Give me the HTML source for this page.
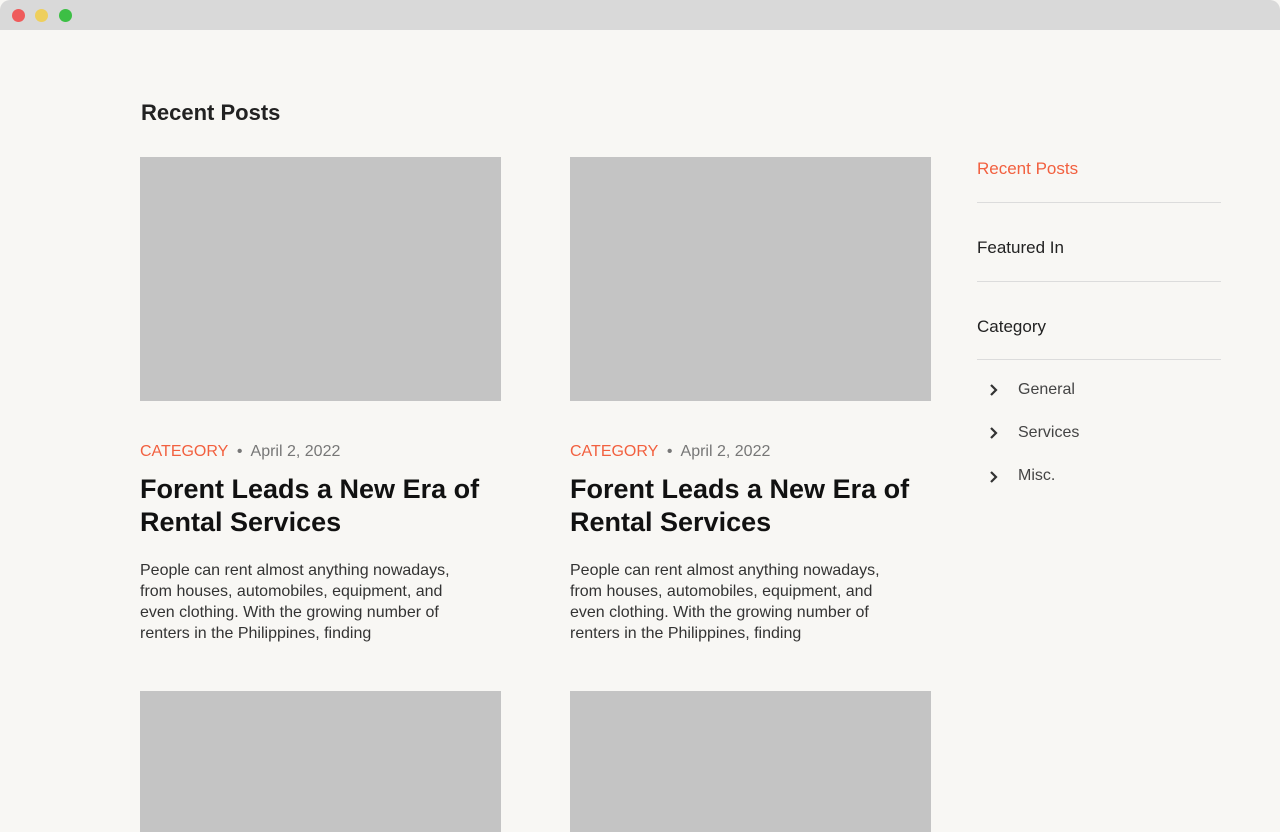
<!DOCTYPE html>
<html><head><meta charset="utf-8"><style>
*{margin:0;padding:0;box-sizing:border-box}
body{width:1280px;height:832px;overflow:hidden;background:#f8f7f4;font-family:"Liberation Sans",sans-serif;position:relative}
.bar{position:absolute;left:0;top:0;width:1280px;height:30px;background:#d9d9d9;border-radius:10px 10px 0 0}
.dot{position:absolute;top:9px;width:13px;height:13px;border-radius:50%}
.a{position:absolute}
.img{position:absolute;background:#c4c4c4;width:361px}
.meta{position:absolute;font-size:16px;color:#777}
.meta span{color:#f2603f}
.title{position:absolute;font-size:27px;font-weight:bold;color:#111;line-height:33px;width:400px;white-space:nowrap}
.ex{position:absolute;font-size:16px;color:#333;line-height:21px;width:400px;white-space:nowrap}
.side{position:absolute;left:977px;font-size:17px;color:#222}
.hr{position:absolute;left:977px;width:244px;height:1px;background:#dcdcdc}
.li{position:absolute;left:1018px;font-size:16px;color:#444}
.ch{position:absolute;left:989px}
</style></head><body>
<div class="bar"></div>
<div class="dot" style="left:12px;background:#ef5b5b"></div>
<div class="dot" style="left:35px;background:#eecf5c"></div>
<div class="dot" style="left:59px;background:#3cbf45"></div>
<div class="a" style="left:141px;top:100px;font-size:22px;color:#222;font-weight:bold">Recent Posts</div>

<div class="img" style="left:140px;top:157px;height:244px"></div>
<div class="img" style="left:570px;top:157px;height:244px"></div>
<div class="meta" style="left:140px;top:443px"><span>CATEGORY</span> &nbsp;•&nbsp; April 2, 2022</div>
<div class="meta" style="left:570px;top:443px"><span>CATEGORY</span> &nbsp;•&nbsp; April 2, 2022</div>
<div class="title" style="left:140px;top:473px">Forent Leads a New Era of<br>Rental Services</div>
<div class="title" style="left:570px;top:473px">Forent Leads a New Era of<br>Rental Services</div>
<div class="ex" style="left:140px;top:560px">People can rent almost anything nowadays,<br>from houses, automobiles, equipment, and<br>even clothing. With the growing number of<br>renters in the Philippines, finding</div>
<div class="ex" style="left:570px;top:560px">People can rent almost anything nowadays,<br>from houses, automobiles, equipment, and<br>even clothing. With the growing number of<br>renters in the Philippines, finding</div>
<div class="img" style="left:140px;top:691px;height:141px"></div>
<div class="img" style="left:570px;top:691px;height:141px"></div>

<div class="side" style="top:159px;color:#f2603f">Recent Posts</div>
<div class="hr" style="top:202px"></div>
<div class="side" style="top:238px">Featured In</div>
<div class="hr" style="top:281px"></div>
<div class="side" style="top:317px">Category</div>
<div class="hr" style="top:359px"></div>
<svg class="ch" style="top:383px" width="10" height="14" viewBox="0 0 10 14"><path d="M2 2l5 5-5 5" fill="none" stroke="#333" stroke-width="2.2"/></svg>
<div class="li" style="top:381px">General</div>
<svg class="ch" style="top:426px" width="10" height="14" viewBox="0 0 10 14"><path d="M2 2l5 5-5 5" fill="none" stroke="#333" stroke-width="2.2"/></svg>
<div class="li" style="top:424px">Services</div>
<svg class="ch" style="top:470px" width="10" height="14" viewBox="0 0 10 14"><path d="M2 2l5 5-5 5" fill="none" stroke="#333" stroke-width="2.2"/></svg>
<div class="li" style="top:467px">Misc.</div>
</body></html>
